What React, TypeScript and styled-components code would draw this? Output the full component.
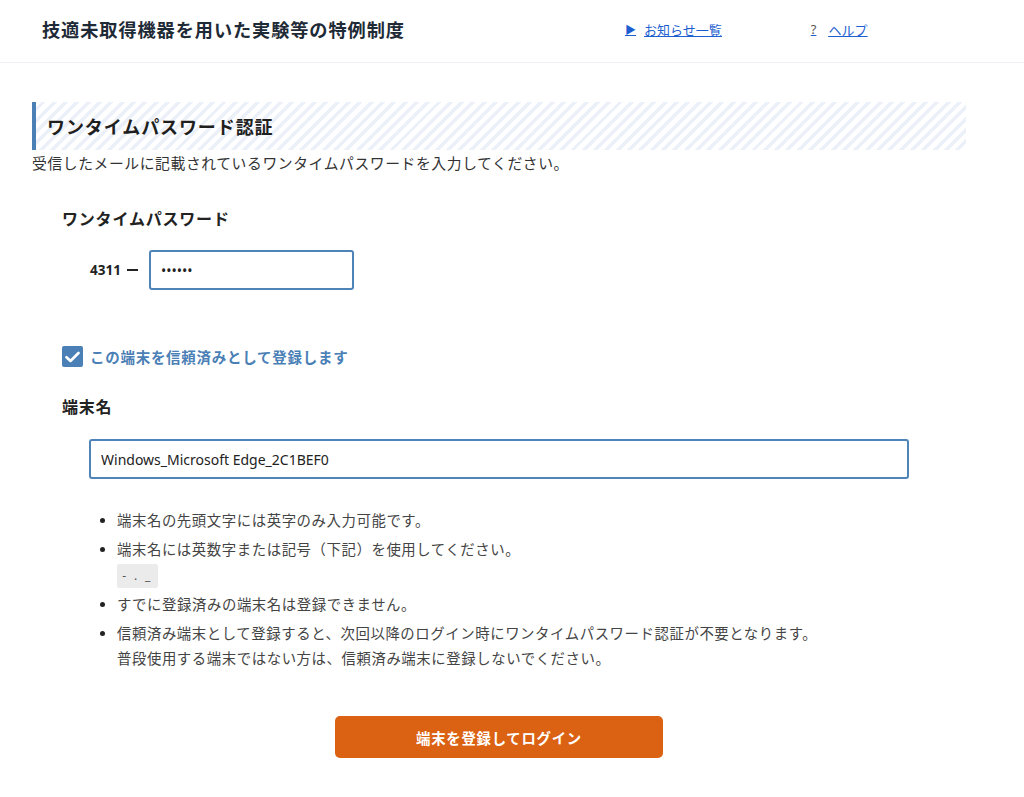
import React from "react";
import styled, { createGlobalStyle } from "styled-components";

const GlobalStyle = createGlobalStyle`
  body {
    margin: 0;
    background: #fff;
    color: #222;
    font-family: "Noto Sans", "Noto Sans CJK JP", sans-serif;
  }
`;

const Header = styled.header`
  height: 63px;
  box-sizing: border-box;
  display: flex;
  align-items: center;
  padding: 0 0 4px 42px;
  border-bottom: 1px solid #eef2f8;
`;

const SiteTitle = styled.h1`
  margin: 0;
  width: 583px;
  font-size: 18.2px;
  font-weight: 700;
  letter-spacing: 0.05em;
  color: #1e2a36;
`;

const Nav = styled.nav`
  display: flex;
  gap: 89px;
  font-size: 13px;
`;

const NavLink = styled.a<{ $gap: number }>`
  display: flex;
  align-items: center;
  gap: ${(p) => p.$gap}px;
  color: #1d5fd0;
  font-size: 13px;
  span {
    text-decoration: underline;
  }
`;

const Mark = styled.i<{ $color: string; $size: number }>`
  font-style: normal;
  color: ${(p) => p.$color};
  font-size: ${(p) => p.$size}px;
  text-decoration: none;
`;

const Main = styled.main`
  width: 934px;
  padding: 39px 0 0 32px;
`;

const PageHeading = styled.h2`
  margin: 0;
  height: 48px;
  display: flex;
  align-items: center;
  padding-left: 11px;
  border-left: 4px solid #4a80b6;
  background: repeating-linear-gradient(
    -45deg,
    #ffffff 0 4.5px,
    #ebf0f9 4.5px 8px
  );
  font-size: 18px;
  font-weight: 700;
  letter-spacing: 0.05em;
  color: #1f1f1f;
`;

const Lead = styled.p`
  margin: 3px 0 0;
  font-size: 14.8px;
  letter-spacing: 0.04em;
  color: #333;
  line-height: 20px;
`;

const Form = styled.form`
  padding-left: 30px;
`;

const FieldLabel = styled.div<{ $top: number }>`
  margin-top: ${(p) => p.$top}px;
  font-size: 16px;
  font-weight: 700;
  letter-spacing: 0.05em;
  color: #222;
  line-height: 22px;
`;

const OtpRow = styled.div`
  margin: 20px 0 0 28px;
  display: flex;
  align-items: center;
  gap: 6px;
`;

const Prefix = styled.span`
  display: flex;
  align-items: center;
  gap: 6px;
  font-size: 13.5px;
  font-weight: 700;
  color: #222;
  width: 53px;
`;

const Dash = styled.span`
  width: 11px;
  height: 2px;
  background: #222;
`;

const TextInput = styled.input<{ $width: number }>`
  box-sizing: border-box;
  width: ${(p) => p.$width}px;
  height: 40px;
  border: 2px solid #4f84b8;
  border-radius: 3px;
  padding: 0 10px;
  font-family: "Noto Sans", "Noto Sans CJK JP", sans-serif;
  font-size: 14px;
  color: #222;
  outline: none;
  background: #fff;
`;

const CheckRow = styled.label`
  margin-top: 56px;
  display: flex;
  align-items: center;
  gap: 7px;
  font-size: 14.5px;
  font-weight: 700;
  letter-spacing: 0.05em;
  color: #4a80b6;
  cursor: pointer;
`;

const CheckBox = styled.span`
  width: 21px;
  height: 21px;
  border-radius: 2px;
  background: #4a80b6;
  display: flex;
  align-items: center;
  justify-content: center;
`;

const NameInputWrap = styled.div`
  margin: 21px 0 0 27px;
`;

const Notes = styled.ul`
  margin: 29px 0 0;
  padding-left: 55px;
  font-size: 14.4px;
  letter-spacing: 0.04em;
  color: #444;
  line-height: 25px;
  li {
    margin-bottom: 4px;
  }
  li::marker {
    color: #222;
  }
`;

const Chip = styled.span`
  display: inline-block;
  width: 41px;
  height: 24px;
  background: #ebebeb;
  border-radius: 2px;
  text-align: center;
  line-height: 24px;
  font-size: 12px;
  color: #555;
  letter-spacing: 0.2em;
`;

const ButtonRow = styled.div`
  display: flex;
  justify-content: center;
  margin-top: 45px;
  padding-right: 30px;
`;

const SubmitButton = styled.button`
  width: 328px;
  height: 42px;
  border: none;
  border-radius: 5px;
  background: #db6113;
  color: #fff;
  font-family: "Noto Sans", "Noto Sans CJK JP", sans-serif;
  font-size: 14.4px;
  font-weight: 700;
  letter-spacing: 0.05em;
  cursor: pointer;
`;

export default function App() {
  return (
    <>
      <GlobalStyle />
      <Header>
        <SiteTitle>技適未取得機器を用いた実験等の特例制度</SiteTitle>
        <Nav>
          <NavLink href="#" $gap={8}>
            <Mark $color="#1d5fd0" $size={11}>▶</Mark>
            <span>お知らせ一覧</span>
          </NavLink>
          <NavLink href="#" $gap={12}>
            <Mark $color="#555" $size={13}>?</Mark>
            <span>ヘルプ</span>
          </NavLink>
        </Nav>
      </Header>
      <Main>
        <PageHeading>ワンタイムパスワード認証</PageHeading>
        <Lead>受信したメールに記載されているワンタイムパスワードを入力してください。</Lead>
        <Form onSubmit={(e) => e.preventDefault()}>
          <FieldLabel $top={35}>ワンタイムパスワード</FieldLabel>
          <OtpRow>
            <Prefix>
              4311
              <Dash />
            </Prefix>
            <TextInput $width={205} type="password" defaultValue="123456" />
          </OtpRow>
          <CheckRow>
            <CheckBox>
              <svg width="15" height="12" viewBox="0 0 15 12">
                <path
                  d="M1.5 6.2 L5.5 10 L13.5 2"
                  fill="none"
                  stroke="#fff"
                  strokeWidth="2.6"
                  strokeLinecap="round"
                  strokeLinejoin="round"
                />
              </svg>
            </CheckBox>
            この端末を信頼済みとして登録します
          </CheckRow>
          <FieldLabel $top={29}>端末名</FieldLabel>
          <NameInputWrap>
            <TextInput $width={820} type="text" defaultValue="Windows_Microsoft Edge_2C1BEF0" />
          </NameInputWrap>
          <Notes>
            <li>端末名の先頭文字には英字のみ入力可能です。</li>
            <li>
              端末名には英数字または記号（下記）を使用してください。
              <br />
              <Chip>- . _</Chip>
            </li>
            <li>すでに登録済みの端末名は登録できません。</li>
            <li>
              信頼済み端末として登録すると、次回以降のログイン時にワンタイムパスワード認証が不要となります。
              <br />
              普段使用する端末ではない方は、信頼済み端末に登録しないでください。
            </li>
          </Notes>
          <ButtonRow>
            <SubmitButton type="submit">端末を登録してログイン</SubmitButton>
          </ButtonRow>
        </Form>
      </Main>
    </>
  );
}
